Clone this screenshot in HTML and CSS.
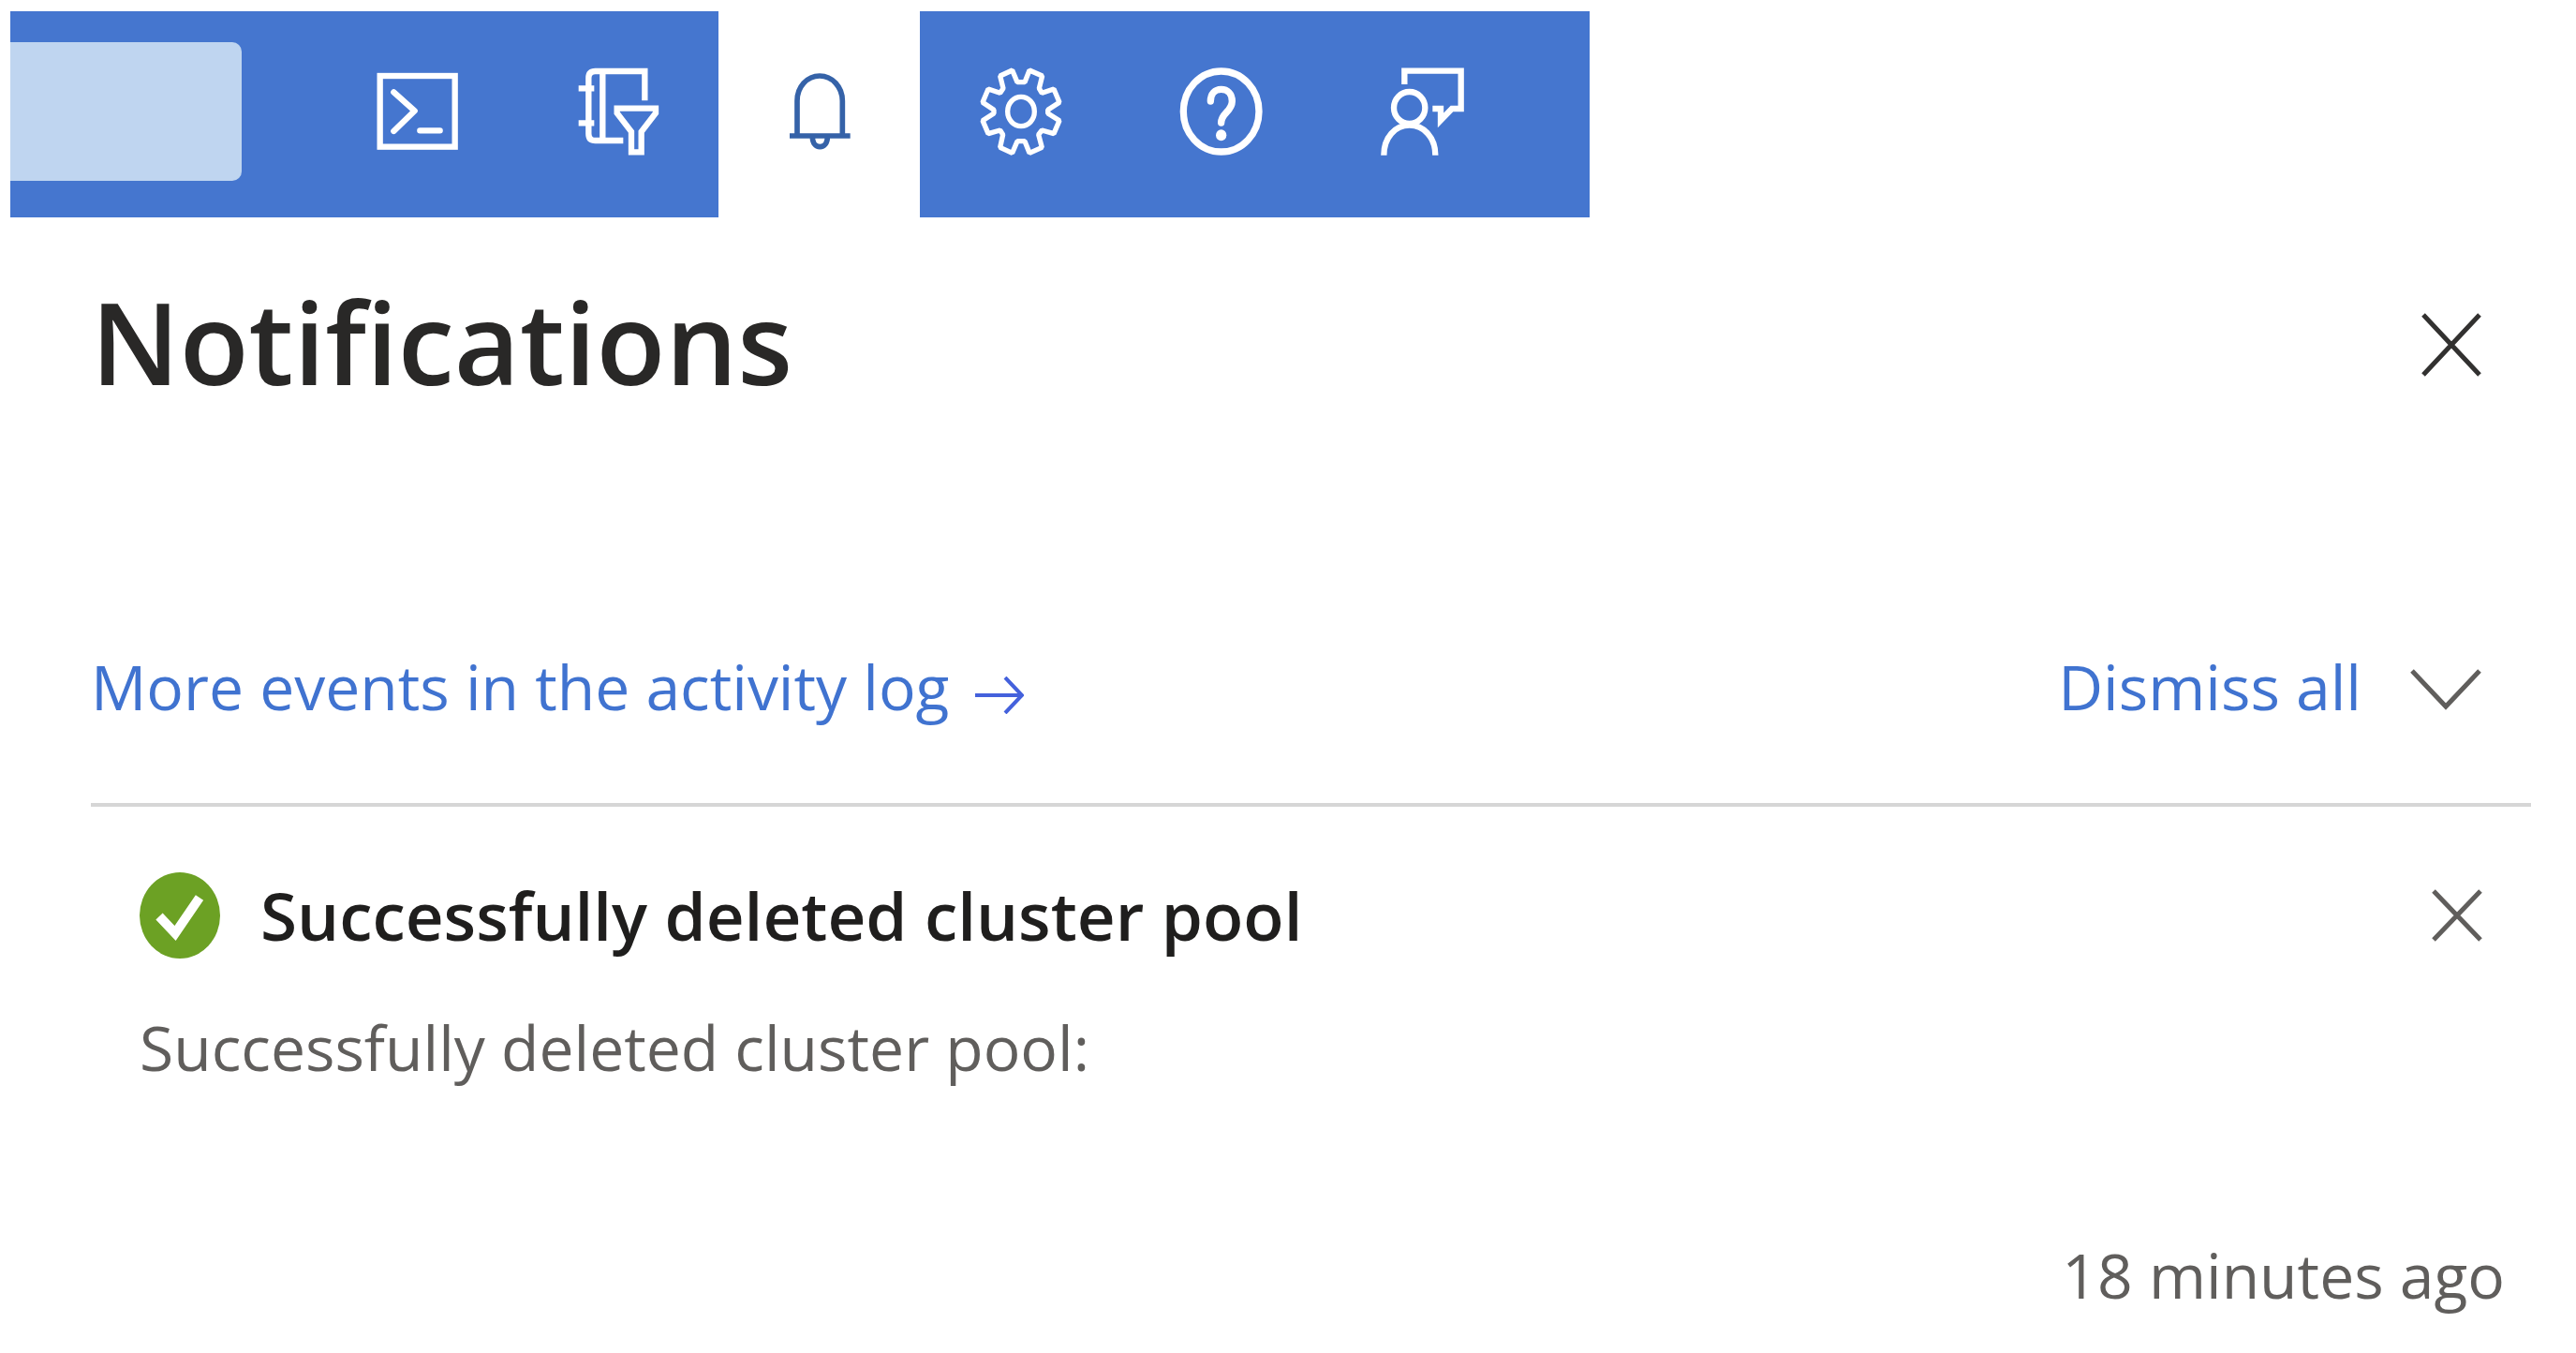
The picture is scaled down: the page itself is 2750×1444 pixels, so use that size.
FILE: index.html
```html
<!DOCTYPE html>
<html lang="en">
<head>
<meta charset="utf-8">
<meta name="viewport" content="width=device-width, initial-scale=1">
<title>Notifications</title>
<link rel="stylesheet" href="styles.css">
</head>
<body>
<header class="topbar">
  <input class="search" type="search" aria-label="Search">
  <nav class="tools" aria-label="Portal tools">
    <button class="tool" type="button" aria-label="Cloud Shell">
      <svg class="tool-icon" viewBox="1191 210 285 312">
        <rect x="1217" y="243" width="240" height="227"/>
        <path d="M1261 295L1328 355L1261 420M1345 418H1409" stroke-linecap="round" stroke-linejoin="round"/>
      </svg>
    </button>
    <button class="tool" type="button" aria-label="Directories and subscriptions">
      <svg class="tool-icon" viewBox="156 90 285 312">
        <path d="M385 202V108H227Q205 108 205 130V308Q205 330 227 330H316M250 108V330M173 163H223M173 274H223"/>
        <path d="M296 227H420V242L374 302V367H342V302L296 242Z"/>
      </svg>
    </button>
    <button class="tool tool-active" type="button" aria-label="Notifications" aria-pressed="true">
      <svg class="tool-icon bell" viewBox="801 90 285 312">
        <path d="M873 315V203C873 158 905 123 945 123S1018 158 1018 203V315M849 315H1043M922 318C922 338 932 350 946 350S970 338 970 318"/>
      </svg>
    </button>
    <button class="tool" type="button" aria-label="Settings">
      <svg class="tool-icon gear" viewBox="246 90 285 312">
        <path d="M378 143H402L417 105L458 123L448 163L457 178L495 165L513 208L476 232V243L513 266L495 308L457 297L446 311L457 352L417 370L402 332H378L362 370L323 352L332 311L323 297L285 308L267 266L303 243V232L267 208L285 165L323 178L333 163L323 123L362 105Z"/>
        <ellipse cx="390" cy="237" rx="43" ry="47"/>
      </svg>
    </button>
    <button class="tool" type="button" aria-label="Help">
      <svg class="tool-icon help" viewBox="891 90 285 312">
        <ellipse cx="1031" cy="237" rx="121" ry="129"/>
        <path d="M997 204C997 180 1011 166 1031 166S1066 180 1066 204C1066 238 1031 241 1031 273" stroke-linecap="round"/>
        <ellipse class="solid" cx="1031" cy="313" rx="17" ry="18"/>
      </svg>
    </button>
    <button class="tool" type="button" aria-label="Feedback">
      <svg class="tool-icon" viewBox="276 210 285 312">
        <path d="M358 270V227H539V348H510L474 385V348H448"/>
        <ellipse cx="374" cy="345" rx="50" ry="51"/>
        <path d="M292 497C292 440 328 401 374 401S457 440 457 497"/>
      </svg>
    </button>
  </nav>
</header>

<main class="panel">
  <div class="panel-head">
    <h1 class="panel-title">Notifications</h1>
    <button class="icon-button" type="button" aria-label="Close panel">
      <svg class="close-large" viewBox="0 0 62 68"><path d="M1 2L61 66M61 2L1 66"/></svg>
    </button>
  </div>

  <div class="actions">
    <a class="link" href="#activity-log">More events in the activity log
      <svg class="arrow" viewBox="0 0 52 40"><path d="M0 20H50M32 1L50 20L32 39"/></svg>
    </a>
    <div class="dismiss">
      <a class="link" href="#dismiss">Dismiss all</a>
      <button class="icon-button" type="button" aria-label="More dismiss options">
        <svg class="chevron" viewBox="0 0 76 44"><path d="M2 2L38 40L74 2"/></svg>
      </button>
    </div>
  </div>

  <article class="notice">
    <div class="notice-head">
      <svg class="status" viewBox="0 0 87 93" role="img" aria-label="Success">
        <ellipse cx="43" cy="46" rx="43" ry="46"/>
        <path d="M21 47L38 65L64 27"/>
      </svg>
      <h2 class="notice-title">Successfully deleted cluster pool</h2>
      <button class="icon-button" type="button" aria-label="Dismiss notification">
        <svg class="close-small" viewBox="0 0 52 56"><path d="M1 2L51 54M51 2L1 54"/></svg>
      </button>
    </div>
    <p class="notice-text">Successfully deleted cluster pool:</p>
    <p class="notice-time">18 minutes ago</p>
  </article>
</main>
</body>
</html>
```
FILE: styles.css
```css
* {
  box-sizing: border-box;
}

body {
  margin: 0;
  padding: 12px 0 0;
  background: #fff;
  color: #605e5c;
  font-family: "Segoe UI", "Open Sans", sans-serif;
  font-size: 66px;
  line-height: 90px;
}

h1, h2, p {
  margin: 0;
}

button {
  border: 0;
  padding: 0;
  background: none;
  cursor: pointer;
}

svg {
  display: block;
  flex: none;
  fill: none;
}

/* Top bar */
.topbar {
  display: flex;
  width: fit-content;
  margin-left: 11px;
  padding-right: 70px;
  background: #4576cf;
}

.search {
  width: 247px;
  height: 148px;
  margin: 33px 79px 0 0;
  padding: 0 24px;
  border: 0;
  border-radius: 0 10px 10px 0;
  background: #bfd5f0;
  font: inherit;
}

.tools {
  display: flex;
}

.tool {
  display: grid;
  place-items: center;
  width: 215px;
  height: 220px;
  color: #fff;
}

.tool-active {
  background: #fff;
  color: #3562a8;
}

.tool-icon {
  width: 95px;
  height: 104px;
  stroke: currentColor;
  stroke-width: 19px;
}

.bell {
  stroke-width: 17px;
}

.gear {
  stroke-width: 16px;
  stroke-linejoin: bevel;
}

.help {
  stroke-width: 22px;
}

.solid {
  fill: currentColor;
  stroke: none;
}

/* Panel */
.panel {
  padding: 52px 48px 40px 97px;
}

.panel-head,
.actions,
.dismiss,
.notice-head {
  display: flex;
  align-items: center;
}

.panel-head,
.actions {
  justify-content: space-between;
  padding-right: 53px;
}

.panel-title {
  color: #292827;
  font-size: 121px;
  font-weight: 600;
  line-height: 160px;
}

.icon-button {
  display: block;
  stroke: #605e5c;
  stroke-width: 5px;
}

.panel-head .icon-button,
.actions .icon-button {
  padding-top: 8px;
}

.close-large {
  width: 64px;
  height: 68px;
  stroke: #323130;
}

.close-small {
  width: 54px;
  height: 56px;
}

.chevron {
  width: 76px;
  height: 44px;
}

.actions {
  padding-top: 243px;
  padding-bottom: 80px;
  border-bottom: 4px solid #d6d6d6;
}

.link {
  display: flex;
  align-items: center;
  gap: 28px;
  color: #4073d0;
  text-decoration: none;
}

.arrow {
  width: 52px;
  height: 40px;
  margin-top: 20px;
  stroke: #4461dc;
  stroke-width: 4px;
}

.dismiss {
  gap: 52px;
}

/* Notification */
.notice {
  padding: 66px 28px 0 52px;
}

.notice-head {
  gap: 42px;
  padding-right: 24px;
}

.status {
  width: 87px;
  height: 93px;
  fill: #6ca124;
}

.status path {
  fill: none;
  stroke: #fff;
  stroke-width: 10px;
}

.notice-title {
  flex: 1;
  color: #1f1e1d;
  font-size: 71px;
  font-weight: 600;
  line-height: 100px;
}

.notice-text {
  padding-top: 45px;
}

.notice-time {
  padding-top: 153px;
  text-align: right;
}
```
